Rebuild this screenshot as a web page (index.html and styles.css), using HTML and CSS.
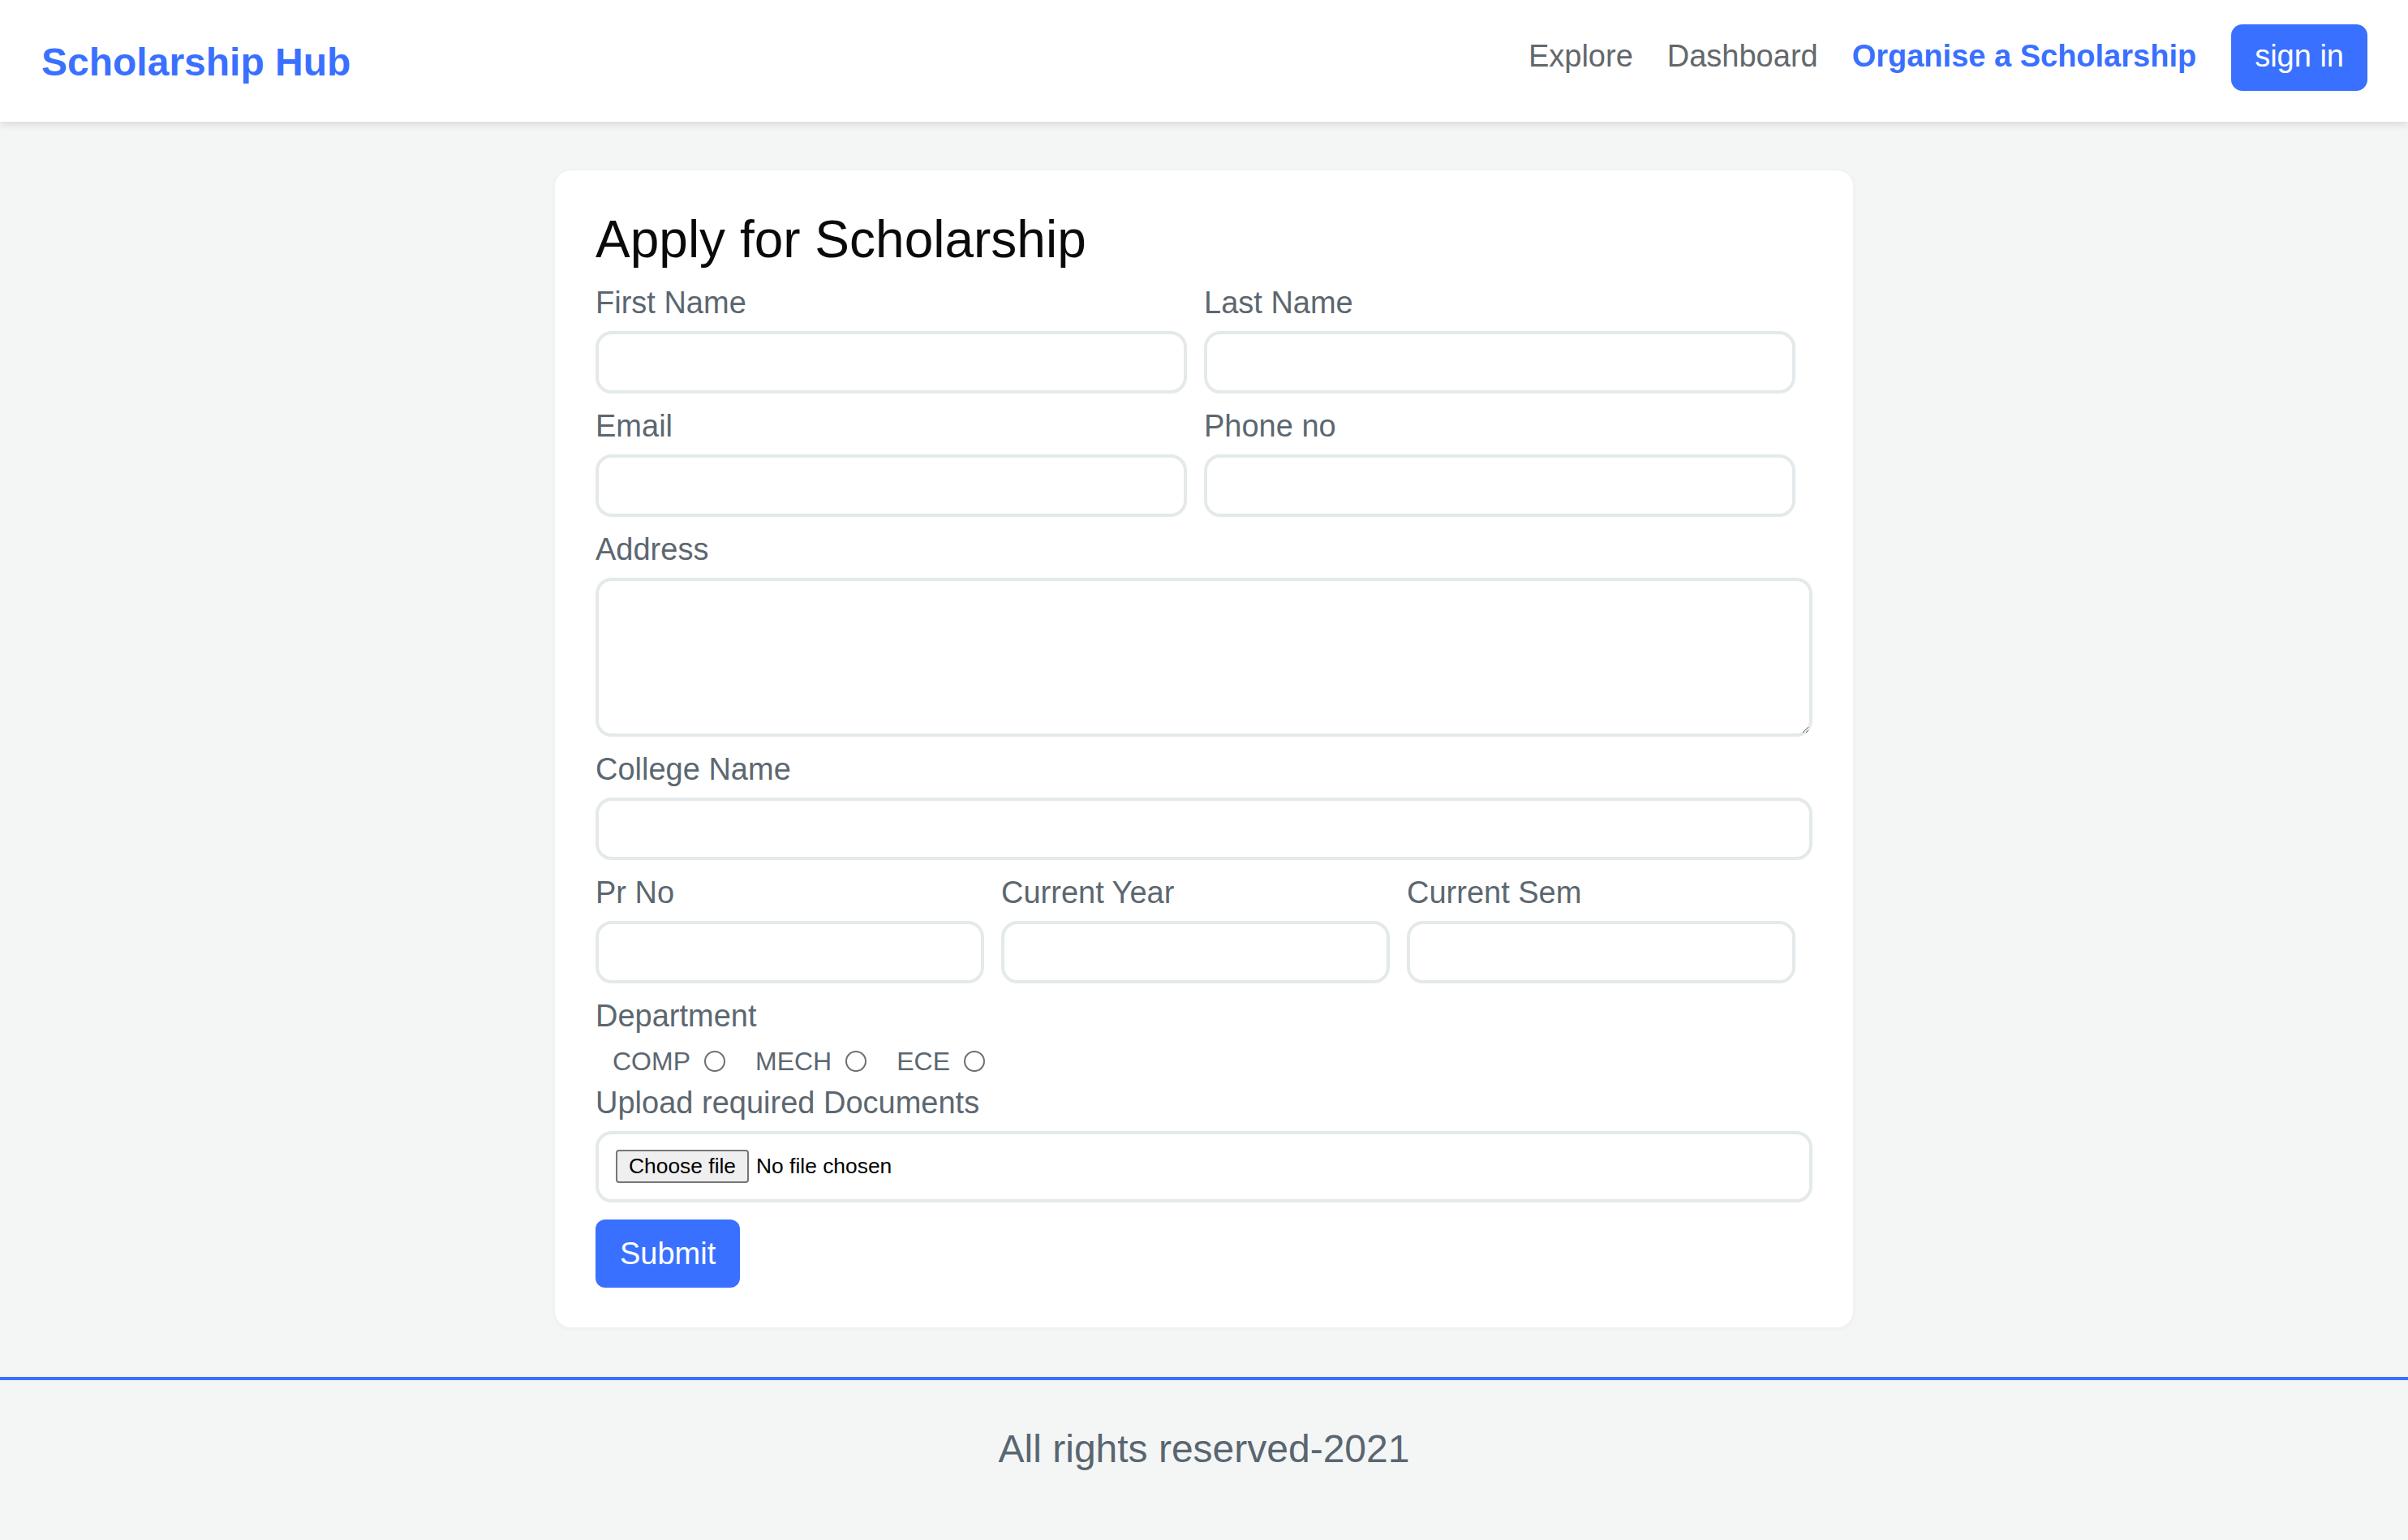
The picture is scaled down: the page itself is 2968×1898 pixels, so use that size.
FILE: index.html
```html
<!DOCTYPE html>
<html lang="en">
<head>
<meta charset="utf-8">
<title>Scholarship Hub</title>
<link rel="stylesheet" href="styles.css">
</head>
<body>
<header class="navbar">
  <a class="brand" href="#">Scholarship Hub</a>
  <div class="nav-right">
    <ul class="nav-links">
      <li><a href="#">Explore</a></li>
      <li><a href="#">Dashboard</a></li>
      <li><a class="active" href="#">Organise a Scholarship</a></li>
    </ul>
    <button class="btn-signin" type="button">sign in</button>
  </div>
</header>

<main class="main">
  <form class="card">
    <h2 class="title">Apply for Scholarship</h2>

    <div class="row two">
      <div class="field">
        <label class="label">First Name</label>
        <input class="control" type="text">
      </div>
      <div class="field">
        <label class="label">Last Name</label>
        <input class="control" type="text">
      </div>
    </div>

    <div class="row two">
      <div class="field">
        <label class="label">Email</label>
        <input class="control" type="email">
      </div>
      <div class="field">
        <label class="label">Phone no</label>
        <input class="control" type="text">
      </div>
    </div>

    <div class="field">
      <label class="label">Address</label>
      <textarea class="control area"></textarea>
    </div>

    <div class="field">
      <label class="label">College Name</label>
      <input class="control" type="text">
    </div>

    <div class="row three">
      <div class="field">
        <label class="label">Pr No</label>
        <input class="control" type="text">
      </div>
      <div class="field">
        <label class="label">Current Year</label>
        <input class="control" type="text">
      </div>
      <div class="field">
        <label class="label">Current Sem</label>
        <input class="control" type="text">
      </div>
    </div>

    <div class="field dept">
      <label class="label">Department</label>
      <div class="radio-row">
        <label class="radio-opt">COMP <input class="radio" type="radio" name="dept"></label>
        <label class="radio-opt">MECH <input class="radio" type="radio" name="dept"></label>
        <label class="radio-opt">ECE <input class="radio" type="radio" name="dept"></label>
      </div>
    </div>

    <div class="upload">
      <label class="label">Upload required Documents</label>
      <label class="file-box">
        <input class="file-hidden" type="file">
        <span class="file-btn">Choose file</span>
        <span class="file-name">No file chosen</span>
      </label>
    </div>

    <button class="btn-submit" type="button">Submit</button>
  </form>
</main>

<footer class="footer">All rights reserved-2021</footer>
</body>
</html>
```
FILE: styles.css
```css
* {
  box-sizing: border-box;
}

html, body {
  margin: 0;
  padding: 0;
}

body {
  background: #f4f6f6;
  font-family: "Liberation Sans", Arial, sans-serif;
  color: #212529;
}

a {
  text-decoration: none;
}

/* Navbar */
.navbar {
  height: 150px;
  background: #ffffff;
  display: flex;
  align-items: center;
  justify-content: space-between;
  padding: 0 50px 0 51px;
  box-shadow: 0 3px 10px rgba(0, 0, 0, 0.12);
  position: relative;
  z-index: 1;
}

.brand {
  font-size: 48px;
  font-weight: 700;
  line-height: 1.2;
  color: #3a70ff;
  margin-top: 3px;
}

.nav-right {
  display: flex;
  align-items: baseline;
  margin-bottom: 8px;
}

.nav-links {
  list-style: none;
  margin: 0;
  padding: 0;
  display: flex;
  align-items: baseline;
}

.nav-links a {
  display: block;
  font-size: 38px;
  line-height: 1.2;
  padding: 0 21px;
  color: #63686b;
}

.nav-links a.active {
  color: #3a70ff;
  font-weight: 700;
}

.btn-signin {
  margin-left: 22px;
  font-family: "Liberation Sans", Arial, sans-serif;
  font-size: 38px;
  line-height: 57px;
  padding: 11px 29px 14px;
  border: 0;
  border-radius: 14px;
  background: #3a70ff;
  color: #ffffff;
}

/* Main */
.main {
  padding: 60px 0 61px;
}

.card {
  width: 1600px;
  margin: 0 auto;
  background: #ffffff;
  border-radius: 20px;
  padding: 47px 50px 49px;
  box-shadow: 0 1px 6px rgba(0, 0, 0, 0.05);
}

.title {
  margin: 0 0 16px;
  font-size: 64px;
  font-weight: 400;
  line-height: 1.2;
  color: #0a0a0a;
}

.row {
  display: grid;
  column-gap: 21px;
  padding-right: 21px;
}

.row.two {
  grid-template-columns: 1fr 1fr;
}

.row.three {
  grid-template-columns: 1fr 1fr 1fr;
}

.field {
  margin-bottom: 17px;
}

.label {
  display: block;
  font-size: 38px;
  line-height: 46px;
  color: #5c6770;
  margin-bottom: 12px;
}

.control {
  display: block;
  width: 100%;
  height: 77px;
  border: 4px solid #e4e9eb;
  border-radius: 20px;
  background: #ffffff;
  padding: 0 20px;
  font-family: "Liberation Sans", Arial, sans-serif;
  font-size: 32px;
  outline: none;
}

.control.area {
  height: 196px;
  resize: vertical;
}

/* Department */
.dept {
  margin-bottom: 8px;
}

.dept .label {
  margin-bottom: 13px;
}

.radio-row {
  display: flex;
  align-items: center;
  gap: 37px;
  padding-left: 21px;
  height: 40px;
}

.radio-opt {
  display: flex;
  align-items: center;
  font-size: 32px;
  line-height: 40px;
  color: #5c6770;
}

.radio {
  appearance: none;
  -webkit-appearance: none;
  width: 26px;
  height: 26px;
  margin: 0 0 0 17px;
  border: 2px solid #6f6f6f;
  border-radius: 50%;
  background: #ffffff;
}

/* Upload */
.upload .label {
  margin-bottom: 12px;
}

.file-box {
  border: 4px solid #e4e9eb;
  border-radius: 20px;
  padding: 0 21px;
  height: 88px;
  display: flex;
  align-items: center;
  font-family: "Liberation Sans", Arial, sans-serif;
  font-size: 26.4px;
  color: #000000;
}

.file-hidden {
  display: none;
}

.file-btn {
  display: flex;
  align-items: center;
  height: 41px;
  padding: 0 14px;
  margin-right: 9px;
  border: 2px solid #767676;
  border-radius: 4px;
  background: #efefef;
  color: #000000;
}

.file-name {
  color: #000000;
}

.btn-submit {
  display: block;
  margin-top: 21px;
  height: 84px;
  padding: 0 30px;
  font-family: "Liberation Sans", Arial, sans-serif;
  font-size: 38px;
  line-height: 84px;
  color: #ffffff;
  background: #3a70ff;
  border: 0;
  border-radius: 12px;
}

/* Footer */
.footer {
  border-top: 4px solid #3a70ff;
  text-align: center;
  font-size: 48px;
  line-height: 56px;
  color: #5a6670;
  padding: 57px 0 83px;
}
```
